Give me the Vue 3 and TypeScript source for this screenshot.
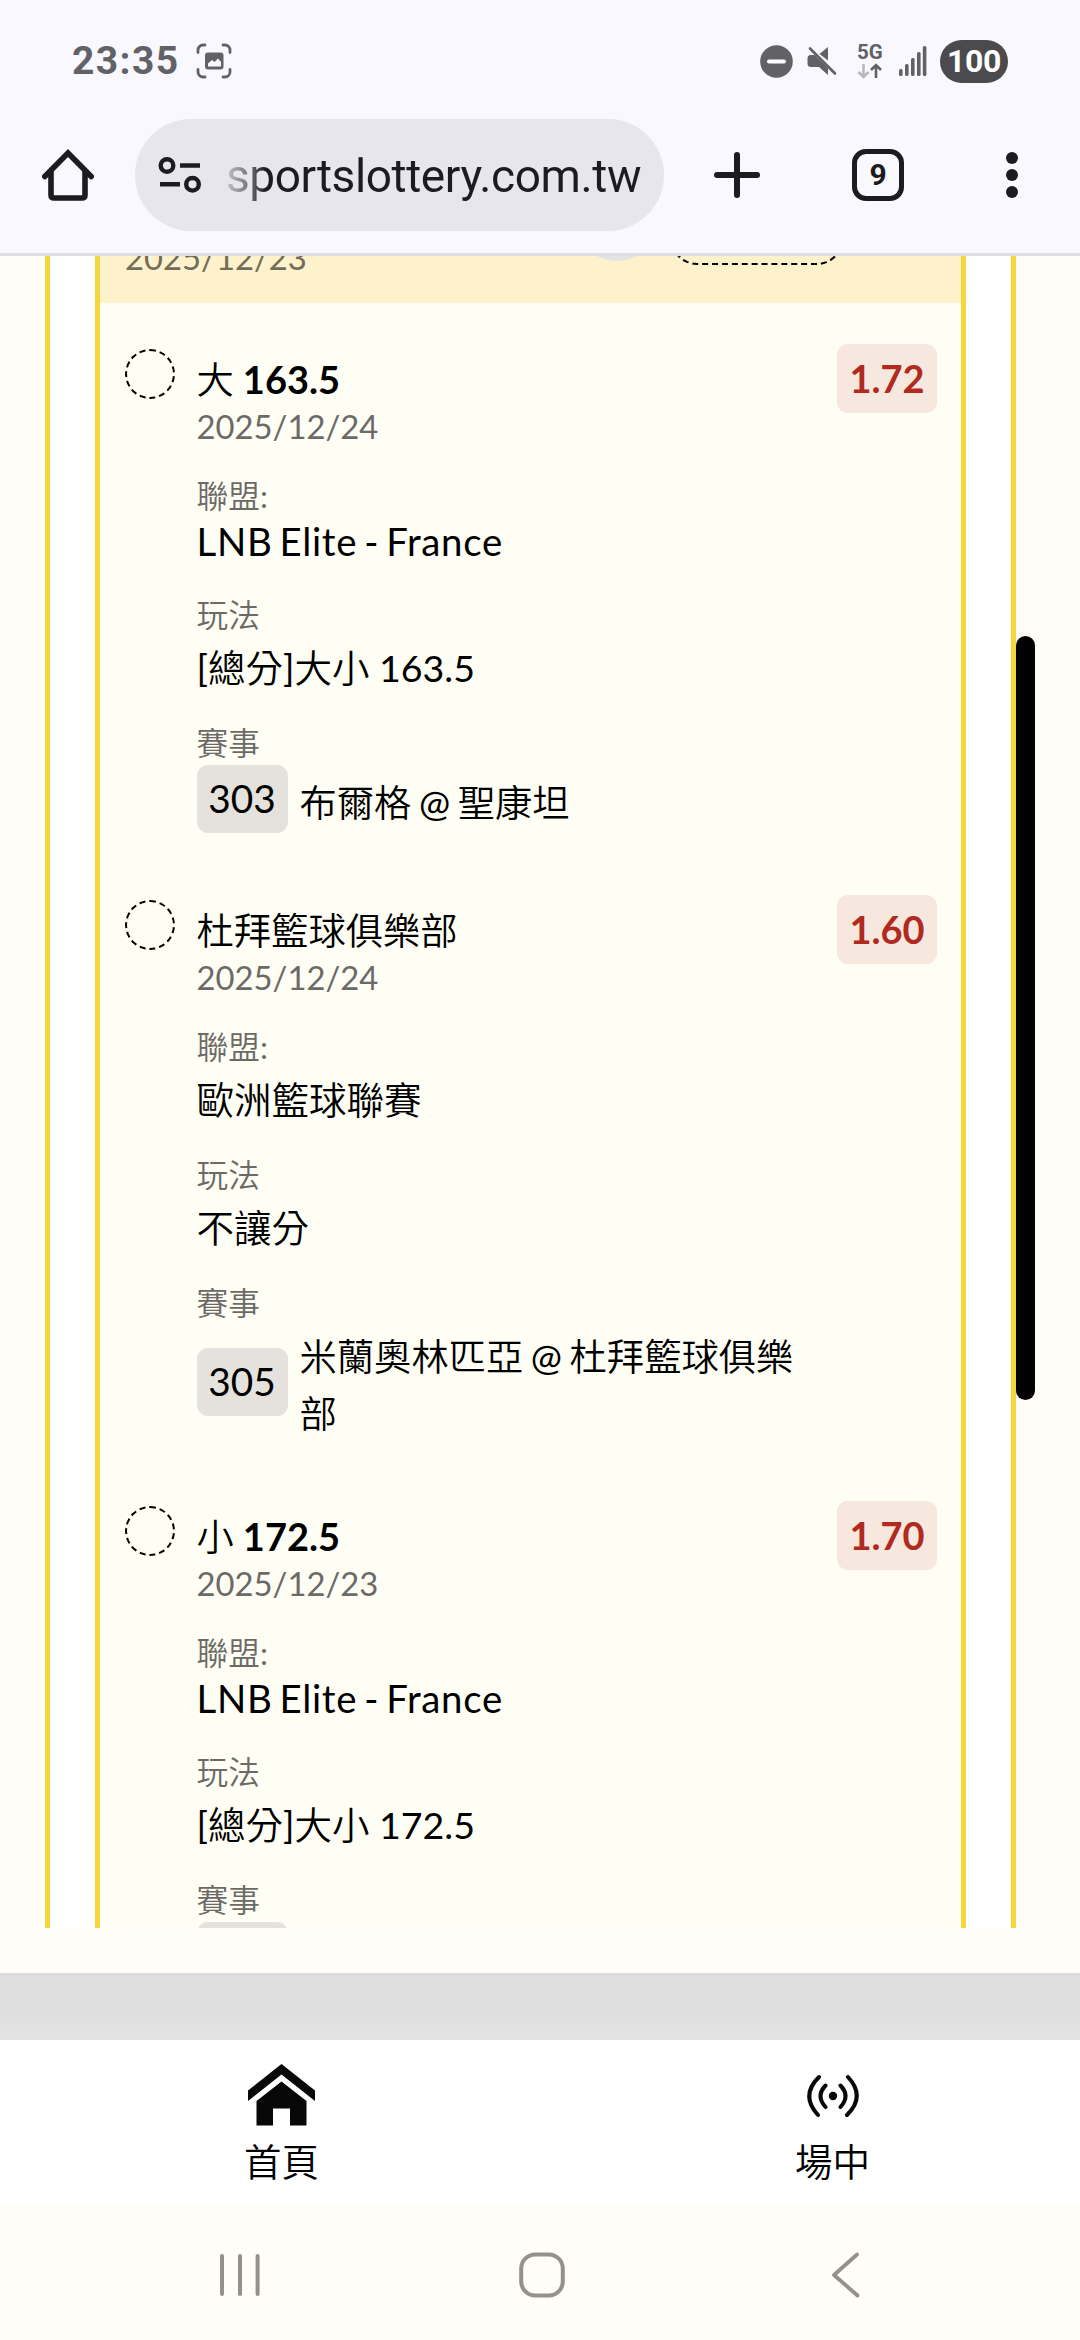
<script setup lang="ts">
interface Bet {
  pick: string
  line?: string
  date: string
  odds: string
  league: string
  market: string
  code: string
  match: string
}

const bets: Bet[] = [
  {
    pick: '大',
    line: '163.5',
    date: '2025/12/24',
    odds: '1.72',
    league: 'LNB Elite - France',
    market: '[總分]大小 163.5',
    code: '303',
    match: '布爾格 @ 聖康坦',
  },
  {
    pick: '杜拜籃球俱樂部',
    date: '2025/12/24',
    odds: '1.60',
    league: '歐洲籃球聯賽',
    market: '不讓分',
    code: '305',
    match: '米蘭奧林匹亞 @ 杜拜籃球俱樂部',
  },
  {
    pick: '小',
    line: '172.5',
    date: '2025/12/23',
    odds: '1.70',
    league: 'LNB Elite - France',
    market: '[總分]大小 172.5',
    code: '',
    match: '',
  },
]

const isLatin = (text: string): boolean => /^[\x20-\x7e]+$/.test(text)
</script>

<template>
  <div class="screen">
    <header class="chrome">
      <div class="status">
        <span class="clock">23:35</span>
        <svg class="shot" width="36" height="36" viewBox="0 0 36 36" fill="none" stroke="#626266" stroke-width="2.8" stroke-linecap="round">
          <path d="M9 2H7a5 5 0 0 0-5 5v2.500M27 2h2a5 5 0 0 1 5 5v2.500M9 34H7a5 5 0 0 1-5-5v-2.500M27 34h2a5 5 0 0 0 5-5v-2.500" />
          <rect x="9" y="9.500" width="18.500" height="17" rx="3" fill="#626266" stroke="none" />
          <path d="M12 23.500v-3l4-3.500 2.500 2 3.500-3.500 3 3.500v4.500z" fill="#f9f8ff" stroke="none" />
        </svg>
        <div class="status-right">
          <svg width="33" height="33" viewBox="0 0 33 33">
            <circle cx="16.500" cy="16.500" r="16.300" fill="#626266" />
            <rect x="7" y="14.500" width="19" height="4" rx="2" fill="#fff" />
          </svg>
          <svg class="mute" width="30" height="30" viewBox="0 0 30 30">
            <path d="M12.500 8 21 1v13.500zM2.500 9h5L21 22v7l-9-8H4a3.500 3.500 0 0 1-3.500-3.500v-5A3.500 3.500 0 0 1 2.500 9z" fill="#626266" />
            <path d="M3 2.500 28 27.500" stroke="#626266" stroke-width="2.600" stroke-linecap="round" />
          </svg>
          <div class="net">
            <span>5G</span>
            <svg width="26" height="16" viewBox="0 0 26 16" fill="none" stroke-width="2.600">
              <path d="M6.500 1v13M1.500 9l5 5 5-5" stroke="#b9b9bd" />
              <path d="M19 15V2M14 7l5-5 5 5" stroke="#626266" />
            </svg>
          </div>
          <svg class="signal" width="28" height="30" viewBox="0 0 28 30" fill="#626266">
            <rect x="0" y="23" width="3.600" height="7" rx="1.500" />
            <rect x="6" y="18" width="3.600" height="12" rx="1.500" />
            <rect x="12" y="12" width="3.600" height="18" rx="1.500" />
            <rect x="18" y="6" width="3.600" height="24" rx="1.500" />
            <rect x="23.800" y="0" width="3.600" height="30" rx="1.500" />
          </svg>
          <span class="battery">100</span>
        </div>
      </div>
      <div class="toolbar">
        <svg class="home" width="52" height="52" viewBox="0 0 52 52" fill="none" stroke="#1b1b20" stroke-width="5.600">
          <path d="M2.800 27.500 26 4l23.200 23.500" stroke-linecap="round" />
          <path d="M9 22v24q0 3 3 3h28q3 0 3-3V22" />
        </svg>
        <div class="address">
          <svg width="44" height="38" viewBox="0 0 44 38" fill="none" stroke="#1b1b20" stroke-width="4.400">
            <circle cx="9" cy="9.500" r="6.300" />
            <circle cx="34.500" cy="28.300" r="6.300" />
            <path d="M22 9.500h20M2 28.300h20" />
          </svg>
          <span class="url">sportslottery.com.tw</span>
        </div>
        <svg class="plus" width="46" height="46" viewBox="0 0 46 46" stroke="#1b1b20" stroke-width="6" stroke-linecap="round">
          <path d="M23 3v40M3 23h40" />
        </svg>
        <span class="tabs">9</span>
        <svg class="more" width="12" height="48" viewBox="0 0 12 48" fill="#1b1b20">
          <circle cx="6" cy="7" r="6" />
          <circle cx="6" cy="24" r="6" />
          <circle cx="6" cy="41" r="6" />
        </svg>
      </div>
    </header>

    <main class="viewport">
      <div class="outer">
        <div class="inner">
          <div class="summary">
            <span class="summary-date">2025/12/23</span>
            <span class="dot"></span>
            <span class="pill"></span>
          </div>
          <article v-for="(bet, i) in bets" :key="i" class="bet">
            <span class="mark"></span>
            <div class="body">
              <div class="title">{{ bet.pick }} <b v-if="bet.line">{{ bet.line }}</b></div>
              <div class="date">{{ bet.date }}</div>
              <div class="field">
                <div class="label">聯盟:</div>
                <div class="value" :class="{ latin: isLatin(bet.league) }">{{ bet.league }}</div>
              </div>
              <div class="field">
                <div class="label">玩法</div>
                <div class="value">{{ bet.market }}</div>
              </div>
              <div class="field">
                <div class="label">賽事</div>
                <div class="match">
                  <span class="code">{{ bet.code }}</span>
                  <span class="teams">{{ bet.match }}</span>
                </div>
              </div>
            </div>
            <span class="odds">{{ bet.odds }}</span>
          </article>
        </div>
      </div>
      <div class="scrollbar"></div>
    </main>

    <div class="gap"></div>
    <div class="band"></div>

    <nav class="tabbar">
      <div class="tab">
        <svg width="67" height="62" viewBox="0 0 67 62" fill="#080808">
          <path d="M33.500 0 67 26.500V37L33.500 10.500 0 37V26.500z" />
          <path d="M33.500 17.500 58.500 37v24.500H42V44.500H25v17H8.500V37z" />
        </svg>
        <span>首頁</span>
      </div>
      <div class="tab">
        <svg width="52" height="62" viewBox="0 0 52 62" fill="none" stroke="#080808" stroke-width="4" stroke-linecap="round">
          <circle cx="26" cy="32" r="4.200" fill="#080808" stroke="none" />
          <path d="M18.500 21.500q-10 10.500 0 21.500M33.500 21.500q10 10.500 0 21.500M12 13q-19 18.500-1 38M41 13q18 19.500-1 38" />
        </svg>
        <span>場中</span>
      </div>
    </nav>

    <footer class="sysnav">
      <svg width="40" height="44" viewBox="0 0 40 44" stroke="#92918c" stroke-width="4" stroke-linecap="round">
        <path d="M2 3v38M20 3v38M37.600 3v38" />
      </svg>
      <svg class="sys-home" width="46" height="46" viewBox="0 0 46 46" fill="none" stroke="#92918c" stroke-width="4">
        <rect x="2.200" y="2.500" width="41.600" height="41" rx="14" />
      </svg>
      <svg width="30" height="46" viewBox="0 0 30 46" fill="none" stroke="#92918c" stroke-width="3.800" stroke-linecap="round" stroke-linejoin="round">
        <path d="M26 2.500 3 23l23.500 20.500" />
      </svg>
    </footer>
  </div>
</template>

<style>
body {
  background: #fffdf5;
}
</style>

<style scoped>
.screen {
  width: 1080px;
  height: 2340px;
  display: flex;
  flex-direction: column;
  overflow: hidden;
  background: #fffdf5;
  font-family: Lato, "Noto Sans CJK TC DemiLight", "Noto Sans CJK TC", sans-serif;
  color: #000;
}
svg {
  display: block;
  flex: none;
}
.chrome {
  height: 256px;
  flex: none;
  box-sizing: border-box;
  background: #f9f8ff;
  border-bottom: 3px solid #dfdfe3;
}
.status {
  height: 82px;
  padding: 20px 72px 0 72px;
  display: flex;
  align-items: center;
}
.clock {
  width: 124px;
  font: 700 39px/44px Roboto, sans-serif;
  letter-spacing: 1.4px;
  color: #626266;
}
.status-right {
  margin-left: auto;
  display: flex;
  align-items: center;
}
.mute {
  margin-left: 14px;
}
.net {
  width: 26px;
  margin-left: 20px;
  display: flex;
  flex-direction: column;
  gap: 2px;
}
.net span {
  font: 700 20.5px/17px Roboto, sans-serif;
  color: #626266;
}
.signal {
  margin-left: 16px;
}
.battery {
  width: 68px;
  height: 43px;
  margin-left: 13px;
  border-radius: 22px;
  background: #4b4b4e;
  color: #fff;
  font: 700 32px/43px Roboto, sans-serif;
  letter-spacing: -0.4px;
  text-align: center;
}
.toolbar {
  display: flex;
  align-items: center;
  height: 112px;
  margin-top: 17px;
  padding-left: 42px;
}
.address {
  width: 529px;
  height: 112px;
  margin-left: 41px;
  box-sizing: border-box;
  padding-left: 23px;
  border-radius: 56px;
  background: #e7e5ed;
  display: flex;
  align-items: center;
}
.url {
  margin-left: 24px;
  padding-top: 2px;
  font: 400 46px/60px Roboto, sans-serif;
  letter-spacing: -0.4px;
  white-space: nowrap;
  background: linear-gradient(90deg, #c4c3ca 0, #77767c 22px, #1b1b20 40px);
  background-clip: text;
  color: transparent;
}
.plus {
  margin-left: 50px;
}
.tabs {
  width: 52px;
  height: 52px;
  margin-left: 92px;
  box-sizing: border-box;
  border: 5.500px solid #1b1b20;
  border-radius: 14px;
  font: 700 30px/41px Roboto, sans-serif;
  color: #1b1b20;
  text-align: center;
}
.more {
  margin-left: 102px;
}

.viewport {
  position: relative;
  height: 1672px;
  flex: none;
  overflow: hidden;
  padding: 0 64px 0 45px;
}
.outer {
  border: solid #f5d73c;
  border-width: 0 5px;
  background: #fff;
  padding: 0 45px;
}
.inner {
  display: flow-root;
  height: 1672px;
  border: solid #f5d73c;
  border-width: 0 5px;
  background: #fffef5;
}
.summary {
  height: 140px;
  margin-top: -93px;
  box-sizing: border-box;
  padding: 0 0 25px 25px;
  display: flex;
  align-items: flex-end;
  background: #fef2cc;
}
.summary-date {
  width: 450px;
  font-size: 32.8px;
  line-height: 40px;
  color: #736c58;
}
.dot {
  width: 84px;
  height: 84px;
  margin-bottom: 17px;
  border-radius: 50%;
  background: #e2e3e5;
}
.pill {
  width: 172px;
  height: 52px;
  margin: 0 0 13px 12px;
  box-sizing: border-box;
  border: 2px dashed #000;
  border-radius: 26px;
}
.bet {
  display: flex;
  align-items: flex-start;
  padding: 0 24px 62px 25px;
}
.summary + .bet {
  margin-top: 41px;
}
.mark {
  width: 50px;
  height: 50px;
  flex: none;
  margin-top: 5px;
  box-sizing: border-box;
  border: 2px dashed #000;
  border-radius: 50%;
}
.body {
  width: 620px;
  margin-left: 21.5px;
  padding-top: 8px;
}
.title {
  font-size: 37.3px;
  line-height: 55px;
  word-spacing: -0.5px;
}
.title b {
  font-size: 38px;
  line-height: 1;
}
.date {
  font-size: 32.8px;
  line-height: 39px;
  margin-bottom: 26px;
  color: #6b6a66;
}
.field + .field {
  margin-top: 27px;
}
.label {
  font-size: 31.7px;
  line-height: 48px;
  margin-bottom: -2px;
  color: #6b6a66;
}
.value {
  font-size: 37.5px;
  line-height: 55px;
  padding-top: 3px;
  margin-bottom: -3px;
}
.value.latin {
  font-size: 38.4px;
  line-height: 46px;
  padding-top: 0;
  margin-bottom: 0;
  letter-spacing: 0.7px;
  word-spacing: -3.5px;
}
.match {
  display: flex;
  align-items: center;
  gap: 12px;
}
.code {
  width: 91px;
  height: 68px;
  flex: none;
  border-radius: 11px;
  background: #e5e2dd;
  font-size: 38.8px;
  line-height: 67px;
  text-align: center;
}
.teams {
  padding-top: 3px;
  margin-bottom: -3px;
  font-size: 37.3px;
  line-height: 57px;
  word-spacing: -2px;
}
.odds {
  width: 100px;
  height: 69px;
  flex: none;
  margin-left: auto;
  border-radius: 11px;
  background: #f6e7df;
  color: #b02a20;
  font-size: 38px;
  font-weight: 700;
  line-height: 69px;
  text-align: center;
}
.scrollbar {
  position: absolute;
  left: 1016px;
  top: 380px;
  width: 19px;
  height: 764px;
  border-radius: 10px;
  background: #000;
}
.gap {
  height: 45px;
  flex: none;
}
.band {
  height: 67px;
  flex: none;
  background: linear-gradient(#dddde0 0, #dfdfdf 4px, #dfdfdf 60%, #e4e4e4);
}
.tabbar {
  height: 165px;
  flex: none;
  box-sizing: border-box;
  padding-left: 6px;
  display: flex;
  background: #fff;
  overflow: hidden;
}
.tab {
  width: 551px;
  flex: none;
  display: flex;
  flex-direction: column;
  align-items: center;
  padding-top: 24px;
}
.tab span {
  margin-top: 7px;
  font-size: 37.5px;
  line-height: 57px;
}
.sysnav {
  height: 135px;
  flex: none;
  box-sizing: border-box;
  display: flex;
  align-items: center;
  padding: 5px 219px 0 220px;
  justify-content: space-between;
}
.sys-home {
  margin-right: 7px;
}
</style>
